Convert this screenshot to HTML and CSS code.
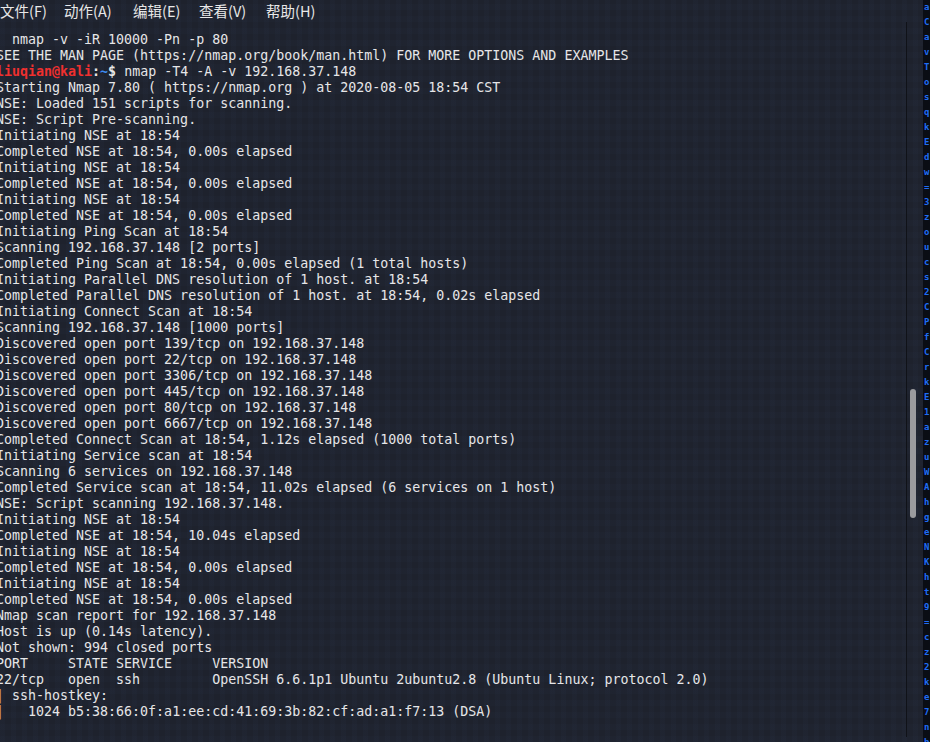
FILE: index.html
```html
<!DOCTYPE html>
<html lang="zh-CN">
<head>
<meta charset="utf-8">
<title>Terminal</title>
<link rel="stylesheet" href="styles.css">
</head>
<body>
<div class="window">
  <div class="main">
    <nav class="menubar">
      <span class="menu">文件(F)</span>
      <span class="menu">动作(A)</span>
      <span class="menu">编辑(E)</span>
      <span class="menu">查看(V)</span>
      <span class="menu">帮助(H)</span>
    </nav>
    <div class="term-row">
      <pre class="term">  nmap -v -iR 10000 -Pn -p 80
SEE THE MAN PAGE (https://nmap.org/book/man.html) FOR MORE OPTIONS AND EXAMPLES
<span class="p-user">liuqian@kali</span><span class="p-colon">:</span><span class="p-path">~</span><span class="p-colon">$</span> nmap -T4 -A -v 192.168.37.148
Starting Nmap 7.80 ( https://nmap.org ) at 2020-08-05 18:54 CST
NSE: Loaded 151 scripts for scanning.
NSE: Script Pre-scanning.
Initiating NSE at 18:54
Completed NSE at 18:54, 0.00s elapsed
Initiating NSE at 18:54
Completed NSE at 18:54, 0.00s elapsed
Initiating NSE at 18:54
Completed NSE at 18:54, 0.00s elapsed
Initiating Ping Scan at 18:54
Scanning 192.168.37.148 [2 ports]
Completed Ping Scan at 18:54, 0.00s elapsed (1 total hosts)
Initiating Parallel DNS resolution of 1 host. at 18:54
Completed Parallel DNS resolution of 1 host. at 18:54, 0.02s elapsed
Initiating Connect Scan at 18:54
Scanning 192.168.37.148 [1000 ports]
Discovered open port 139/tcp on 192.168.37.148
Discovered open port 22/tcp on 192.168.37.148
Discovered open port 3306/tcp on 192.168.37.148
Discovered open port 445/tcp on 192.168.37.148
Discovered open port 80/tcp on 192.168.37.148
Discovered open port 6667/tcp on 192.168.37.148
Completed Connect Scan at 18:54, 1.12s elapsed (1000 total ports)
Initiating Service scan at 18:54
Scanning 6 services on 192.168.37.148
Completed Service scan at 18:54, 11.02s elapsed (6 services on 1 host)
NSE: Script scanning 192.168.37.148.
Initiating NSE at 18:54
Completed NSE at 18:54, 10.04s elapsed
Initiating NSE at 18:54
Completed NSE at 18:54, 0.00s elapsed
Initiating NSE at 18:54
Completed NSE at 18:54, 0.00s elapsed
Nmap scan report for 192.168.37.148
Host is up (0.14s latency).
Not shown: 994 closed ports
PORT     STATE SERVICE     VERSION
22/tcp   open  ssh         OpenSSH 6.6.1p1 Ubuntu 2ubuntu2.8 (Ubuntu Linux; protocol 2.0)
<span class="pipe">|</span> ssh-hostkey:
<span class="pipe">|</span>   1024 b5:38:66:0f:a1:ee:cd:41:69:3b:82:cf:ad:a1:f7:13 (DSA)</pre>
      <div class="divider"></div>
      <div class="scroll-track"><div class="scroll-thumb"></div></div>
    </div>
  </div>
  <div class="strip" aria-hidden="true">
    <pre class="strip-text">a
C
a
v
T
o
s
q
k
E
d
w
=
3
z
o
u
c
s
2
C
P
f
C
r
k
E
1
a
z
u
W
A
h
g
e
N
K
h
t
9
=
c
z
2
k
e
7
n
b</pre>
  </div>
</div>
</body>
</html>
```
FILE: styles.css
```css
html, body {
  margin: 0;
  padding: 0;
  width: 930px;
  height: 742px;
  overflow: hidden;
  background: #1e222d;
}

.window {
  display: flex;
  width: 930px;
  height: 742px;
}

.main {
  flex: 1;
  display: flex;
  flex-direction: column;
  min-width: 0;
  background-color: #1e222d;
  background-image:
    repeating-linear-gradient(90deg, rgba(60, 80, 120, 0.05) 0 5px, transparent 5px 11px),
    repeating-linear-gradient(0deg, rgba(60, 80, 120, 0.04) 0 6px, transparent 6px 12px);
}

.menubar {
  display: grid;
  grid-template-columns: 64px 69px 66px 67px auto;
  height: 22px;
  align-items: center;
  font-family: "Noto Sans CJK SC", "Noto Sans", sans-serif;
  font-size: 14.5px;
  color: #e8e8e8;
  flex: none;
}

.menu {
  line-height: 20px;
  white-space: nowrap;
}

.term-row {
  flex: 1;
  display: flex;
  min-height: 0;
  padding-top: 10px;
}

.term {
  flex: 1;
  margin: 0 0 0 -4px;
  font-family: "DejaVu Sans Mono", "Liberation Mono", monospace;
  font-size: 13.3px;
  line-height: 16px;
  color: #e6e6e8;
  white-space: pre;
  overflow: hidden;
}

.p-user {
  color: #f0302f;
  font-weight: bold;
}

.p-colon {
  color: #e8e8e8;
  font-weight: bold;
}

.p-path {
  color: #3c8cf2;
  font-weight: bold;
}

.pipe {
  color: #d9a66a;
}

.divider {
  width: 1px;
  background: #101218;
  margin-top: -10px;
  margin-bottom: 5px;
  flex: none;
}

.scroll-track {
  width: 16px;
  flex: none;
  position: relative;
}

.scroll-thumb {
  position: absolute;
  left: 3px;
  top: 357px;
  width: 6px;
  height: 129px;
  border-radius: 3px;
  background: #9b9b9e;
}

.strip {
  width: 7px;
  flex: none;
  background: #0a0d14;
  overflow: hidden;
}

.strip-text {
  margin: 0;
  padding-left: 1px;
  font-family: "DejaVu Sans Mono", monospace;
  font-size: 9px;
  font-weight: bold;
  line-height: 15px;
  color: #1f6cf5;
}
```
